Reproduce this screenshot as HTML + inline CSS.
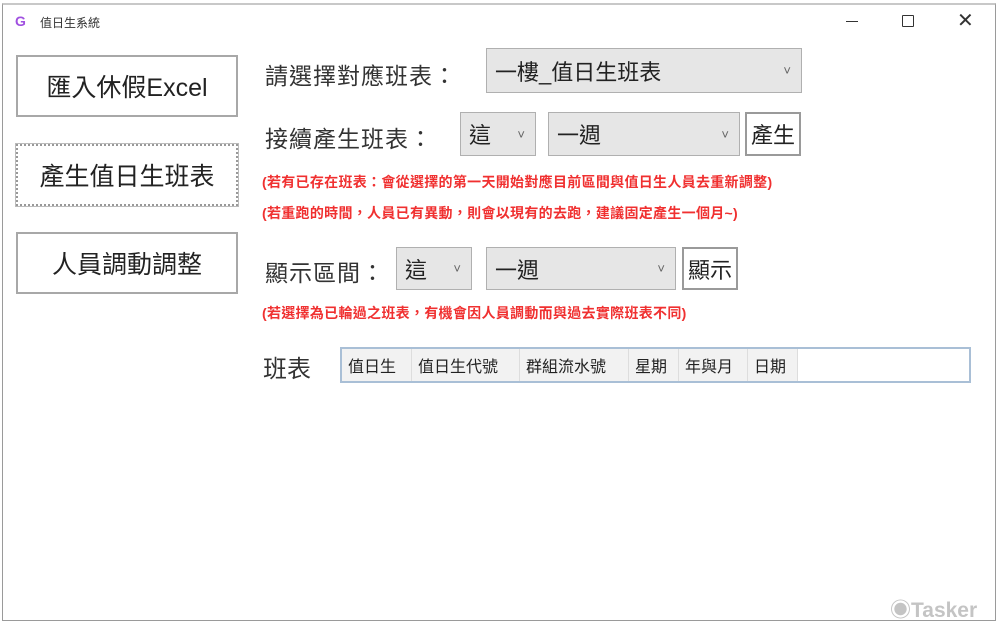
<!DOCTYPE html>
<html><head><meta charset="utf-8"><style>
*{margin:0;padding:0;box-sizing:border-box}
body{width:1000px;height:628px;background:#fff;position:relative;overflow:hidden;font-family:"Liberation Sans","Noto Sans CJK TC",sans-serif;color:#222}
.a{position:absolute}
.win{left:2px;top:3px;width:994px;height:618px;border:1px solid #9a9a9a;border-top:2px solid #c8c8c8}
.btn{border:2px solid #a8a8a8;background:#fff;font-size:25px;display:flex;align-items:center;justify-content:center}
.lbl{font-size:23px;color:#333;letter-spacing:1px}
.cb{background:#e6e6e6;border:1px solid #b0b0b0;font-size:22px;padding-left:8px;display:flex;align-items:center}
.cb:after{content:"˅";position:absolute;right:10px;font-size:13px;color:#666}
.sb{background:#fff;border:2px solid #9a9a9a;font-size:22px;display:flex;align-items:center;justify-content:center}
.red{color:#f03030;font-size:14px;font-weight:bold;letter-spacing:.3px}
.grid{border:2px solid #a9bfd6;background:#fff;display:flex}
.grid div{font-size:16px;padding:0 6px;border-right:1px solid #ddd;background:#f2f2f2;height:100%;display:flex;align-items:center}
</style></head><body>
<div class="a win"></div>
<div class="a" style="left:15px;top:13px;font-size:14px;font-weight:bold;color:#a050e0">G</div>
<div class="a" style="left:40px;top:14px;font-size:12px;color:#333">值日生系統</div>
<div class="a" style="left:846px;top:21px;width:12px;height:1px;background:#333"></div>
<div class="a" style="left:902px;top:15px;width:12px;height:12px;border:1.5px solid #333;border-radius:1px"></div>
<div class="a" style="left:957px;top:8px;font-size:20px;color:#333">✕</div>

<div class="a btn" style="left:16px;top:55px;width:222px;height:62px">匯入休假Excel</div>
<div class="a btn" style="left:16px;top:144px;width:222px;height:62px;border:2px dotted #999;outline:1px solid #bbb">產生值日生班表</div>
<div class="a btn" style="left:16px;top:232px;width:222px;height:62px">人員調動調整</div>

<div class="a lbl" style="left:265px;top:57px">請選擇對應班表：</div>
<div class="a cb" style="left:486px;top:48px;width:316px;height:45px">一樓_值日生班表</div>
<div class="a lbl" style="left:265px;top:120px">接續產生班表：</div>
<div class="a cb" style="left:460px;top:112px;width:76px;height:44px">這</div>
<div class="a cb" style="left:548px;top:112px;width:192px;height:44px">一週</div>
<div class="a sb" style="left:745px;top:112px;width:56px;height:44px">產生</div>
<div class="a red" style="left:262px;top:172px">(若有已存在班表：會從選擇的第一天開始對應目前區間與值日生人員去重新調整)</div>
<div class="a red" style="left:262px;top:203px">(若重跑的時間，人員已有異動，則會以現有的去跑，建議固定產生一個月~)</div>
<div class="a lbl" style="left:265px;top:254px">顯示區間：</div>
<div class="a cb" style="left:396px;top:247px;width:76px;height:43px">這</div>
<div class="a cb" style="left:486px;top:247px;width:190px;height:43px">一週</div>
<div class="a sb" style="left:682px;top:247px;width:56px;height:43px">顯示</div>
<div class="a red" style="left:262px;top:303px">(若選擇為已輪過之班表，有機會因人員調動而與過去實際班表不同)</div>
<div class="a" style="left:263px;top:349px;font-size:24px;color:#333">班表</div>
<div class="a grid" style="left:340px;top:347px;width:631px;height:36px">
<div style="width:70px">值日生</div><div style="width:108px">值日生代號</div><div style="width:109px">群組流水號</div><div style="width:50px">星期</div><div style="width:69px">年與月</div><div style="width:50px">日期</div><div style="flex:1;background:#fff;border:none"></div>
</div>
<div class="a" style="left:890px;top:594px;font-size:21px;font-weight:bold;color:#c4c4c4">◉Tasker</div>
</body></html>
